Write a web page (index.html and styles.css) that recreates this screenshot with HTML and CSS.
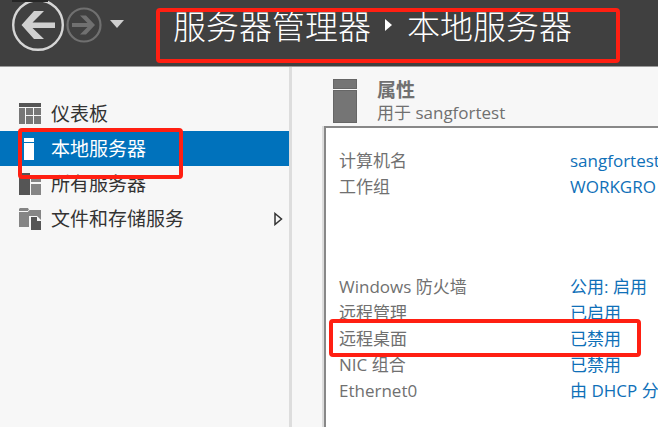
FILE: index.html
```
<!DOCTYPE html>
<html lang="zh-CN">
<head>
<meta charset="utf-8">
<title>服务器管理器</title>
<link rel="stylesheet" href="styles.css">
</head>
<body>
<header class="topbar">
  <button class="nav-button back" type="button" aria-label="后退">
    <svg width="52" height="52" viewBox="0 0 52 52"><circle cx="26" cy="26" r="24.8" fill="none" stroke="#d6d6d6" stroke-width="2.400"/><path d="M9.500 26 22 12h10L20.500 23.500H43v5.500H20.500L32 40H22z" fill="#d0d0d0"/><path d="M0 0h36v3H0z" fill="#262626"/></svg>
  </button>
  <button class="nav-button forward" type="button" aria-label="前进">
    <svg width="36" height="36" viewBox="0 0 36 36"><circle cx="18" cy="18" r="16.500" fill="none" stroke="#707070" stroke-width="2.200"/><path d="M29 18 20 27.500h-6l7.500-7.500H6v-4h15.500L14 8.500h6z" fill="#707070"/></svg>
  </button>
  <button class="nav-button history" type="button" aria-label="历史记录">
    <svg width="14" height="8" viewBox="0 0 14 8"><path d="M0 0h14L7 8z" fill="#d0d0d0"/></svg>
  </button>
  <h1 class="breadcrumb">
    <span>服务器管理器</span>
    <svg class="crumb-arrow" width="8" height="12" viewBox="0 0 8 12"><path d="M0 0 7 6 0 12z" fill="#fff"/></svg>
    <span>本地服务器</span>
    <span class="mark mark-title"></span>
  </h1>
</header>
<div class="workspace">
  <nav class="sidebar">
    <a class="item" href="#dashboard">
      <svg class="item-icon" width="22" height="22" viewBox="0 0 22 22"><path d="M0 0h22v4H0z" fill="#555"/><path d="M0 5h6v16H0zM7 5h7v7H7zM15 5h7v7h-7zM7 13h7v8H7zM15 13h7v8h-7z" fill="#777"/></svg>
      <span>仪表板</span>
    </a>
    <a class="item selected" href="#local" aria-current="page">
      <svg class="item-icon" width="22" height="22" viewBox="0 0 22 22"><path d="M5 0h10v4H5zM5 5h10v17H5z" fill="#fff"/></svg>
      <span>本地服务器</span>
      <span class="mark mark-item"></span>
    </a>
    <a class="item" href="#all">
      <svg class="item-icon" width="22" height="22" viewBox="0 0 22 22"><path d="M0 0h11v3H0zM0 4h11v18H0z" fill="#555"/><path d="M12 4h10v5H12zM12 11h10v11H12z" fill="#858585"/></svg>
      <span>所有服务器</span>
    </a>
    <a class="item" href="#storage">
      <svg class="item-icon" width="22" height="22" viewBox="0 0 22 22"><path d="M1 0h8l1 2h12v17H0V1z" fill="#858585"/><path d="M0 3.500h9l1.500-2H22" fill="none" stroke="#f7f7f7"/><path d="M10 8h8l5 5v10H10z" fill="#f7f7f7"/><path d="M12 9h6v4h4v9H12z" fill="#555"/></svg>
      <span>文件和存储服务</span>
      <svg class="expand" width="9" height="14" viewBox="0 0 9 14"><path d="M1 1.500 7.500 7 1 12.500z" fill="none" stroke="#333" stroke-width="1.500"/></svg>
    </a>
  </nav>
  <main class="content">
    <div class="section-head">
      <svg width="24" height="44" viewBox="0 0 24 44"><path d="M0 0h24v10H0zM0 11h24v33H0z" fill="#666"/><path d="M1 1h22v8H1zM1 12h22v31H1z" fill="#757575"/></svg>
      <div>
        <h2 class="section-title">属性</h2>
        <p class="section-sub">用于 sangfortest</p>
      </div>
    </div>
    <div class="panel">
      <dl class="properties">
        <div class="row"><dt>计算机名</dt><dd><a href="#name">sangfortest</a></dd></div>
        <div class="row"><dt>工作组</dt><dd><a href="#group">WORKGRO</a></dd></div>
      </dl>
      <dl class="properties">
        <div class="row"><dt>Windows 防火墙</dt><dd><a href="#firewall">公用: 启用</a></dd></div>
        <div class="row"><dt>远程管理</dt><dd><a href="#management">已启用</a></dd></div>
        <div class="row"><dt>远程桌面</dt><dd><a href="#desktop">已禁用</a></dd><span class="mark mark-row"></span></div>
        <div class="row"><dt>NIC 组合</dt><dd><a href="#nic">已禁用</a></dd></div>
        <div class="row"><dt>Ethernet0</dt><dd><a href="#ethernet">由 DHCP 分</a></dd></div>
      </dl>
    </div>
  </main>
</div>
</body>
</html>
```
FILE: styles.css
```
* { box-sizing: border-box; }

body {
  margin: 0;
  height: 100vh;
  display: flex;
  flex-direction: column;
  overflow: hidden;
  background: #f7f7f7;
  color: #333;
  font-family: "Open Sans", "Noto Sans CJK SC", sans-serif;
  white-space: nowrap;
}

h1, h2, p, dl, dd { margin: 0; }
a { color: inherit; text-decoration: none; }
svg { display: block; flex: none; }

.topbar {
  flex: none;
  display: flex;
  height: 67px;
  padding: 0 8px 17px 12px;
  align-items: center;
  background: #404040;
  border-bottom: 1px solid #999;
}

.nav-button {
  padding: 0;
  border: 0;
  background: none;
}

.forward { margin-left: 2px; }
.history { margin: 0 0 2px 8px; }

.breadcrumb {
  position: relative;
  display: flex;
  align-items: center;
  gap: 14px;
  margin-left: 49px;
  color: #fff;
  font-family: "Noto Sans CJK SC", sans-serif;
  font-size: 33px;
  font-weight: 300;
  line-height: 48px;
}

.mark {
  position: absolute;
  z-index: 1;
  border: 4px solid #ff1f12;
  border-radius: 4px;
  pointer-events: none;
}

.mark-title { top: 7px; bottom: -14px; left: -17px; right: -48px; }
.mark-item { top: -3px; bottom: -13px; left: 18px; width: 165px; }
.mark-row { top: -7px; bottom: -5px; left: -10px; width: 312px; }

.workspace {
  flex: 1;
  display: flex;
  min-height: 0;
}

.sidebar {
  flex: none;
  width: 44.4%;
  max-width: 292px;
  padding-top: 29px;
  border-right: 3px solid #ddd;
}

.item {
  position: relative;
  display: flex;
  align-items: center;
  height: 35px;
  padding: 0 6px 0 19px;
  gap: 10px;
  font-size: 19px;
  line-height: 26px;
}

.selected {
  background: #0072bc;
  color: #fff;
}

.expand { margin-left: auto; }

.content {
  flex: 1;
  min-width: 0;
  display: flex;
  flex-direction: column;
  padding: 9px 0 0 32px;
  color: #707070;
  font-size: 17px;
}

.section-head {
  display: flex;
  align-items: center;
  gap: 20px;
  height: 50px;
  padding-left: 9px;
}

.section-title {
  font-size: 19px;
  line-height: 24px;
}

.section-sub { line-height: 22px; }

.panel {
  flex: 1;
  display: flex;
  flex-direction: column;
  gap: 74px;
  padding: 20px 0 0 13px;
  background: #fff;
  border-top: 2px solid #888;
  border-left: 2px solid #888;
  box-shadow: -2px 0 #ddd;
  overflow: hidden;
}

.row {
  position: relative;
  display: flex;
  line-height: 26px;
}

dt { width: 231px; flex: none; }
dd { color: #0f70b8; }
```
